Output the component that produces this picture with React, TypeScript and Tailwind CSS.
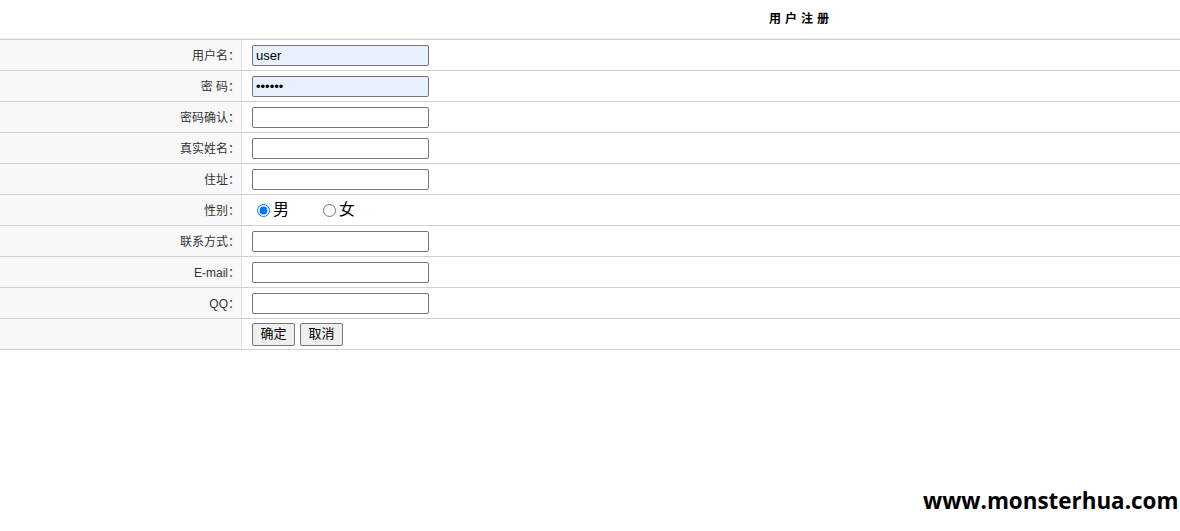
import React from "react";

const cjk = { fontFamily: '"Liberation Sans", "Noto Sans CJK SC", sans-serif' };

function Row({ label, children }: { label: string; children?: React.ReactNode }) {
  return (
    <div className="flex h-[31px] border-t border-[#d0d0d0]">
      <div className="w-[242px] shrink-0 bg-[#f8f8f8] border-r border-[#e2e2e2] flex items-center justify-end pr-[1px] pt-[1px] text-[12px] text-[#333]">
        {label}
      </div>
      <div className="flex-1 flex items-center pl-[10px]">{children}</div>
    </div>
  );
}

function Input({ value, type = "text", filled = false }: { value?: string; type?: string; filled?: boolean }) {
  return (
    <input
      type={type}
      defaultValue={value}
      className={
        "w-[177px] h-[21px] border border-[#767676] rounded-[2px] px-[3px] text-[13px] text-black outline-none " +
        (filled ? "bg-[#e8f0fe]" : "bg-white")
      }
      style={cjk}
    />
  );
}

export default function App() {
  return (
    <div className="relative w-[1180px] h-[531px] bg-white overflow-hidden" style={cjk}>
      <div className="h-[39px] flex items-center pl-[769px] border-b border-[#ececec]">
        <span className="text-[12px] font-bold tracking-[4px] text-black">用户注册</span>
      </div>
      <Row label="用户名：">
        <Input value="user" filled />
      </Row>
      <Row label="密 码：">
        <Input value="123456" type="password" filled />
      </Row>
      <Row label="密码确认：">
        <Input />
      </Row>
      <Row label="真实姓名：">
        <Input />
      </Row>
      <Row label="住址：">
        <Input />
      </Row>
      <Row label="性别：">
        <label className="flex items-center text-[16px] text-black">
          <input type="radio" name="sex" defaultChecked className="w-[13px] h-[13px] ml-[5px] mr-[3px] accent-[#0075ff]" />
          男
        </label>
        <label className="flex items-center text-[16px] text-black ml-[29px]">
          <input type="radio" name="sex" className="w-[13px] h-[13px] ml-[5px] mr-[3px]" />
          女
        </label>
      </Row>
      <Row label="联系方式：">
        <Input />
      </Row>
      <Row label="E-mail：">
        <Input />
      </Row>
      <Row label="QQ：">
        <Input />
      </Row>
      <Row label="">
        <div className="flex gap-[5px]">
          <button className="w-[43px] h-[23px] border border-[#767676] rounded-[2px] bg-[#efefef] text-[13px] text-black">确定</button>
          <button className="w-[43px] h-[23px] border border-[#767676] rounded-[2px] bg-[#efefef] text-[13px] text-black">取消</button>
        </div>
      </Row>
      <div className="border-t border-[#d0d0d0]" />
      <div
        className="absolute left-[918px] top-[470px] w-[262px] h-[61px] bg-white flex items-center pl-[5px] text-[22.4px] font-bold text-black"
        style={{ fontFamily: '"Open Sans", sans-serif' }}
      >
        www.monsterhua.com
      </div>
    </div>
  );
}
